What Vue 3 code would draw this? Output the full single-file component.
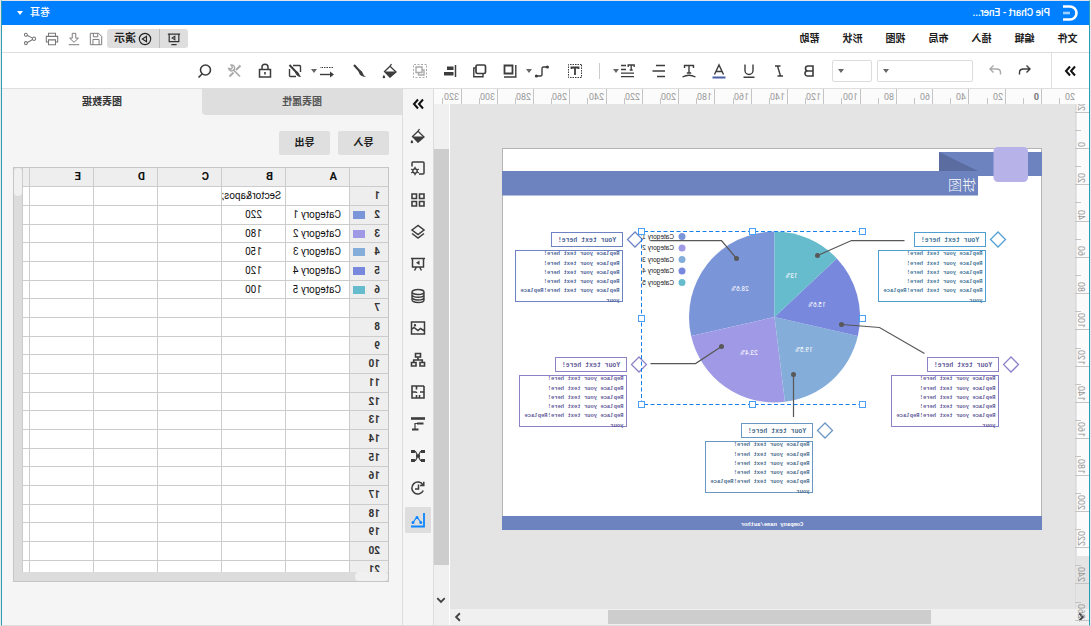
<script setup>
import { h } from 'vue'

const s = (d, o = {}) => ({ d, o })
const fill = (d, o = {}) => ({ d, o: { fill: 'currentColor', stroke: 'none', ...o } })

const shapes = {
  more: [s('M3 3.5l4 4.5-4 4.5M8 3.5l4 4.5-4 4.5', { 'stroke-width': 2 })],
  undo: [s('M6.5 2.5L3 6l3.5 3.5M3.5 6H9.5Q13.5 6 13.5 9.5V11.5')],
  redo: [s('M9.5 2.5L13 6l-3.5 3.5M12.5 6H6.5Q2.5 6 2.5 9.5V11.5')],
  bold: [s('M4 3h5a2.5 2.5 0 0 1 0 5H4zM4 8h5.5a2.5 2.5 0 0 1 0 5H4z', { 'stroke-width': 1.6 })],
  italic: [s('M6.5 3H12M4 13h5.5M9.5 3L6.5 13')],
  underline: [s('M4 1.5v6a4 4 0 0 0 8 0v-6M2.5 14.2h11')],
  color: [s('M3.5 11.5L8 2l4.500 9.5M5.2 8.5h5.6'), s('M1.5 14.5h13', { stroke: '#4a5fa8', 'stroke-width': 2 })],
  textArc: [s('M3.5 5V2.5h9V5M8 2.5V10M5.8 10h4.4'), s('M1.5 14Q8 10.5 14.5 14')],
  align: [s('M2 2.5h9M2 8h12.5M2 13.5h8')],
  spacing: [s('M1.8 4V2h6v2M4.8 2v5M3.3 7h3M10 2.5h5M10 6.5h5M2 10.2h13M2 13.7h13', { 'stroke-width': 1.3 })],
  textBox: [s('M1.5 1.5h13v13h-13z', { 'stroke-dasharray': '1.5 1', 'stroke-width': 1 }), s('M4.5 6V4.5h7V6M8 4.5V12', { 'stroke-width': 1.8 })],
  connector: [s('M3 4h3.5Q8 4 8 5.5v6Q8 13 9.5 13H13'), fill('M1 4a1.6 1.6 0 1 0 3.2 0A1.6 1.6 0 1 0 1 4M12 13a1.6 1.6 0 1 0 3.2 0A1.6 1.6 0 1 0 12 13')],
  front: [s('M5.5 2.5h8v8h-8z', { 'stroke-width': 1.8 }), s('M2.2 2v12H14')],
  back: [s('M4 2h6.5a1.5 1.5 0 0 1 1.5 1.5V9a1.5 1.5 0 0 1-1.5 1.5H4A1.5 1.5 0 0 1 2.500 9V3.5A1.5 1.5 0 0 1 4 2z', { 'stroke-width': 1.7 }), s('M12.5 5h1.7v8.7H5V11')],
  alignLeft: [s('M2.5 2v12', { 'stroke-width': 1.5 }), fill('M4.5 3.5h6.5v3.5H4.5zM4.5 9h9.5v3.5H4.5z')],
  group: [s('M1.5 1.5h13v13h-13z', { 'stroke-dasharray': '2 1.5', 'stroke-width': 1 }), s('M6 4h6v5.500H6zM6 7H4v5h5.500V9.500')],
  bucket: [s('M6.5 1L8 3.2 2 9l6 5 5.5-5.5L8 3.2', { 'stroke-width': 1.3 }), fill('M2 8.500h11.7L8 14.500zM12.8 14a1.3 1.3 0 1 0 2.6 0l-1.3-2.2z')],
  pen: [s('M14 2L8 8.5', { 'stroke-width': 2.2 }), fill('M9.5 8.5Q8.5 13.5 2 14 5 12 5 10.5 6 7.5 8 7.3z')],
  lineStyle: [s('M2 4.5h13', { 'stroke-dasharray': '1.5 1', 'stroke-width': 1.2 }), s('M3 11.5h12'), fill('M1 11.5l4-3v6z')],
  noFill: [s('M10 2.5H3.5q-1 0-1 1V9M7 13.5h5.5q1 0 1-1V6'), s('M13.5 2L6.5 9.5', { 'stroke-width': 2 }), fill('M8 9.5Q6 14 1.8 14 3.5 12 4 10.5 5 8 7 8z')],
  lock: [s('M2.5 6.5h11v7.5h-11zM5 6.5V4.2a3 3 0 0 1 6 0v2.3', { 'stroke-width': 1.5 }), fill('M7.2 9h1.6v2.5H7.2z')],
  tools: [s('M2.5 2.5L7 7M9.5 9.5l4 4', { 'stroke-width': 2 }), s('M3 13.500L10 6.500', { 'stroke-width': 1.7 }), s('M12 2a3 3 0 1 0 2.3 3.5L11.8 6 10.5 4.5z')],
  search: [s('M2.5 7a5 5 0 1 0 10 0 5 5 0 1 0-10 0M11 11l3.5 3.5', { 'stroke-width': 1.6 })],
  save: [s('M5 1.500h9.500v13h-13V5zM4.500 14.500V8.500h7v6M6 1.500V5.500h5V1.500', { 'stroke-width': 1.1 })],
  download: [s('M6 1.5h4V7h3L8 11.8 3 7h3zM2 14.5h12', { 'stroke-width': 1.1 })],
  print: [s('M4 5V1.5h8V5M4 11.5H1.5v-6.5h13v6.500H12M4 9h8v5.500H4z', { 'stroke-width': 1.2 })],
  share: [s('M5 7l6-3M5 8.5l6 3.500M1.5 7.7a1.9 1.9 0 1 0 3.8 0 1.9 1.9 0 1 0-3.8 0M11 3.2a1.7 1.7 0 1 0 3.4 0 1.7 1.7 0 1 0-3.4 0M11 12.7a1.7 1.7 0 1 0 3.4 0 1.7 1.7 0 1 0-3.4 0', { 'stroke-width': 1.2, transform: 'matrix(1 0 0 1 0 0)' })],
  screen: [s('M1 2.5h14M2.5 2.5v8.500h11V2.5M5 14.500h6', { 'stroke-width': 1.4 }), s('M7 4.8v4.200l3.2-2.1z', { 'stroke-width': 1.2 })],
  play: [s('M1.500 8a6.500 6.500 0 1 0 13 0 6.500 6.500 0 1 0-13 0M6.3 5v6l4.700-3z', { 'stroke-width': 1.3 })],
  fileGear: [s('M7 14H3q-1 0-1-1V3q0-1 1-1h10q1 0 1 1v3.500', { 'stroke-width': 1.5 }), s('M8.8 11a2.2 2.2 0 1 0 4.4 0 2.2 2.2 0 1 0-4.4 0'), s('M11 6.800v2M11 13.200v2M7.2 9l1.7 1M13.1 12l1.7 1M7.2 13l1.7-1M13.1 10l1.7-1')],
  grid: [s('M2 2h4.500v4.500H2zM9.500 2H14v4.500H9.500zM2 9.500h4.500V14H2zM9.500 9.500H14V14H9.500z', { 'stroke-width': 1.6 })],
  layers: [s('M8 1.500l6 4.500-6 4.500L2 6zM2 9.500l6 4.500 6-4.500', { 'stroke-width': 1.5 })],
  easel: [s('M1 2.500h14M2.500 2.500V11h11V2.500M6.500 11L4.500 14.500M9.500 11l2 3.500', { 'stroke-width': 1.5 }), fill('M6.500 4.500v4.500l3.500-2.200z')],
  database: [s('M2 4a6 2.500 0 1 0 12 0A6 2.500 0 1 0 2 4v8a6 2.500 0 0 0 12 0V4M2 6.8a6 2.500 0 0 0 12 0M2 9.500a6 2.500 0 0 0 12 0')],
  image: [s('M1.500 2h13v12h-13zM1.500 11l4-2.500 2.500 2 4-3 2.500 2', { 'stroke-width': 1.5 }), fill('M9.8 5.2a1.200 1.200 0 1 0 2.4 0 1.200 1.200 0 1 0-2.4 0')],
  org: [s('M5.500 1.500h5V5h-5zM1.500 10.500h4.500v3.500H1.500zM10 10.500h4.500v3.500H10zM8 5v3M3.700 10.500V8h8.600v2.500', { 'stroke-width': 1.6 })],
  floor: [s('M2 2h12v12H9.500V11M6.500 14H2V2M6.500 14V11M2 8h4M9.500 2v3.500M9.500 8H14M9.500 8v1M6.500 14h3', { 'stroke-width': 1.6 })],
  gantt: [s('M1 2.500h14', { 'stroke-width': 2.6 }), s('M2.500 7.500h6.500M7.500 13.500H14', { 'stroke-width': 2.2 }), s('M9 7.500h2V13', { 'stroke-width': 1.2 })],
  mind: [s('M3 3.500h2.500L8 8l2.500-4.500H13M3 12.500h2.500L8 8l2.500 4.500H13', { 'stroke-width': 1.2 }), fill('M1 2h4v3H1zM11 2h4v3h-4zM1 11h4v3H1zM11 11h4v3h-4zM6 6.500h4v3H6z')],
  history: [s('M3 5A6 6 0 1 1 2.700 10.500M2.200 1.800V5.500H6M7.500 4.500v4.500H11', { 'stroke-width': 1.5 })],
  chart: [s('M2 1v13.500h13', { 'stroke-width': 1.8 }), s('M5 10.500L9 5l4 5.500', { 'stroke-width': 1.2 }), fill('M3.700 10.500a1.500 1.500 0 1 0 3 0 1.500 1.500 0 1 0-3 0M7.500 5.500a1.500 1.500 0 1 0 3 0 1.500 1.500 0 1 0-3 0M11.500 10.500a1.500 1.500 0 1 0 3 0 1.500 1.500 0 1 0-3 0')]
}

const Icon = (props) =>
  h(
    'svg',
    { viewBox: '0 0 16 16', fill: 'none', stroke: 'currentColor', 'stroke-width': 1.4, 'aria-hidden': 'true' },
    shapes[props.name].map((p) => h('path', { d: p.d, ...p.o }))
  )
Icon.props = ['name']

const menus = ['文件', '编辑', '插入', '布局', '视图', '形状', '帮助']
const quick = [['save', '保存'], ['download', '下载'], ['print', '打印'], ['share', '分享']]
const textTools = [
  ['bold', 'Bold'], ['italic', 'Italic'], ['underline', 'Underline'],
  ['color', 'Font color'], ['textArc', 'Curved text'], ['align', 'Align']
]
const shapeTools = [
  ['textBox', 'Text box'], ['connector', 'Connector', 'drop'], ['front', 'Bring to front'], ['back', 'Send to back'],
  ['alignLeft', 'Align left'], ['group', 'Group', 'off'], ['bucket', 'Fill'], ['pen', 'Line color'],
  ['lineStyle', 'Line style', 'drop'], ['noFill', 'Style'], ['lock', 'Lock'], ['tools', 'Tools', 'off'], ['search', 'Find']
]
const rail = ['more', 'bucket', 'fileGear', 'grid', 'layers', 'easel', 'database', 'image', 'org', 'floor', 'gantt', 'mind', 'history', 'chart']

const step = 18.14
const ticks = (from, to, zero) =>
  Array.from({ length: to - from + 1 }, (_, i) => {
    const n = from + i
    return { pos: Math.round(zero + n * step), label: n % 2 === 0 ? Math.abs(n * 10) : null }
  })
const hTicks = ticks(-2, 34, 33)
const vTicks = ticks(-2, 27, 44)

const series = [
  { name: 'Category 1', value: 220, color: '#7a95d8', pct: '28.6%', lx: 604, ly: 286 },
  { name: 'Category 2', value: 180, color: '#a09ae6', pct: '23.4%', lx: 586, ly: 414 },
  { name: 'Category 3', value: 150, color: '#84aed9', pct: '19.5%', lx: 476, ly: 408 },
  { name: 'Category 4', value: 120, color: '#7888dd', pct: '15.6%', lx: 450, ly: 318 },
  { name: 'Category 5', value: 100, color: '#66bbcd', pct: '13%', lx: 501, ly: 260 }
]
const total = series.reduce((a, b) => a + b.value, 0)
const cx = 535
const cy = 338
const r = 171
let angle = 0
const slices = series.map((d) => {
  const a0 = angle
  angle += (d.value / total) * Math.PI * 2
  const at = (a) => `${(cx + r * Math.sin(a)).toFixed(1)} ${(cy - r * Math.cos(a)).toFixed(1)}`
  return { ...d, path: `M${cx} ${cy}L${at(a0)}A${r} ${r} 0 0 1 ${at(angle)}Z` }
})

const bodyLines = [
  ['Replace your text here!', 45], ['Replace your text here!', 65], ['Replace your text here!', 83],
  ['Replace your text here!', 101], ['Replace your text here!Replace', 119], ['your', 139]
]
const callouts = [
  { x: 113, y: 169, line: '#4f9fd3', text: '#3f7597' },
  { x: 831, y: 419, line: '#8c82c8', text: '#635a98' },
  { x: 839, y: 169, line: '#6d83c4', text: '#4c6296' },
  { x: 87, y: 419, line: '#8c82c8', text: '#635a98' },
  { x: 459, y: 551, line: '#6a97c2', text: '#4b6c8c' }
]
const leaders = [
  { dot: [611, 221], pts: '611,221 641,185 783,185' },
  { dot: [449, 215], pts: '449,215 381,185 275,185' },
  { dot: [401, 353], pts: '401,353 325,359 235,411' },
  { dot: [497, 453], pts: '497,453 497,538' },
  { dot: [641, 397], pts: '641,397 693,431 783,431' }
]
const handles = [
  [359, 167], [579, 167], [801, 167], [359, 341], [801, 341], [359, 513], [579, 513], [801, 513]
]

const columns = ['A', 'B', 'C', 'D', 'E']
const rows = Array.from({ length: 21 }, (_, i) => {
  const d = series[i - 1]
  return { n: i + 1, color: d?.color, a: d?.name ?? '', b: i === 0 ? 'Sector&apos;' : d?.value ?? '' }
})
</script>

<template>
  <div class="app">
    <header class="title-bar">
      <svg class="logo" viewBox="0 0 16 16" fill="none" stroke="#fff" aria-hidden="true">
        <path d="M15 1.500H8a6.500 6.500 0 0 0 0 13h7" stroke-width="2.600" />
        <path d="M8 8h7" stroke="#9fd0ff" stroke-width="2.600" />
      </svg>
      <span class="doc-name">Pie Chart - Ener...</span>
      <button class="user" type="button">卷耳<i class="caret light"></i></button>
    </header>

    <nav class="menu-bar">
      <button v-for="m in menus" :key="m" class="menu" type="button">{{ m }}</button>
      <div class="present">
        <button type="button" class="present-screen" aria-label="全屏"><Icon name="screen" class="icon14" /></button>
        <button type="button" class="present-play"><Icon name="play" class="icon14" />演示</button>
      </div>
      <button v-for="q in quick" :key="q[0]" class="quick" type="button" :aria-label="q[1]"><Icon :name="q[0]" class="icon14" /></button>
    </nav>

    <div class="toolbar">
      <button class="expand" type="button" aria-label="Expand"><Icon name="more" class="icon" /></button>
      <button class="tool history" type="button" aria-label="Undo"><Icon name="undo" class="icon" /></button>
      <button class="tool off" type="button" aria-label="Redo"><Icon name="redo" class="icon" /></button>
      <label class="pick family"><select aria-label="Font family"><option></option></select><i class="caret"></i></label>
      <label class="pick size"><select aria-label="Font size"><option></option></select><i class="caret"></i></label>
      <button v-for="t in textTools" :key="t[0]" class="tool" type="button" :aria-label="t[1]"><Icon :name="t[0]" class="icon" /></button>
      <button class="tool spacing" type="button" aria-label="Line spacing"><Icon name="spacing" class="icon" /><i class="caret"></i></button>
      <span class="rule"></span>
      <button v-for="t in shapeTools" :key="t[0]" class="tool" :class="t[2]" type="button" :aria-label="t[1]">
        <Icon :name="t[0]" class="icon" /><i v-if="t[2] === 'drop'" class="caret"></i>
      </button>
    </div>

    <main class="main">
      <section class="workspace">
        <svg class="h-ruler" aria-hidden="true">
          <g v-for="t in hTicks" :key="t.pos">
            <rect :x="t.pos" :y="t.label === null ? 9 : 0" width="1" :height="t.label === null ? 6 : 15" fill="#c4c4c4" />
            <text v-if="t.label !== null" :x="t.pos + 3" y="11" :class="{ zero: t.label === 0 }">{{ t.label }}</text>
          </g>
        </svg>
        <div class="canvas">
          <svg class="page" viewBox="0 0 1080 764">
            <rect x="1" y="1" width="1078" height="762" fill="#fff" stroke="#b4b4b4" stroke-width="2" />
            <rect x="0" y="8" width="206" height="48" fill="#6d83bf" />
            <path d="M206 8v38h-78z" fill="#5a6ca0" />
            <rect x="128" y="46" width="952" height="49" fill="#6d83bf" />
            <rect x="28" y="-2" width="69" height="70" rx="9" fill="#b7b2e8" />
            <text x="132" y="83" class="page-title">饼图</text>
            <rect x="0" y="736" width="1080" height="28" fill="#6d83bf" />
            <text x="540" y="756" class="footer-text">Company name/author</text>

            <path v-for="d in slices" :key="d.name" :d="d.path" :fill="d.color" />
            <text v-for="d in slices" :key="d.pct" :x="d.lx" :y="d.ly" class="pct">{{ d.pct }}</text>
            <g v-for="(d, i) in series" :key="d.name">
              <circle cx="720" :cy="177 + i * 23" r="7" :fill="d.color" />
              <text x="736" :y="181 + i * 23" class="legend">{{ d.name }}</text>
            </g>

            <g v-for="l in leaders" :key="l.pts">
              <polyline :points="l.pts" fill="none" stroke="#585858" stroke-width="2.500" />
              <circle :cx="l.dot[0]" :cy="l.dot[1]" r="5" fill="#585858" />
            </g>

            <g v-for="c in callouts" :key="c.x" :transform="`translate(${c.x} ${c.y})`">
              <rect width="142" height="28" fill="none" :stroke="c.line" stroke-width="2" />
              <rect y="36" width="214" height="102" fill="none" :stroke="c.line" stroke-width="2" />
              <path d="M-25 -1L-10 14L-25 29L-40 14Z" fill="none" :stroke="c.line" stroke-width="2.500" />
              <text x="71" y="19" class="call-head" :fill="c.text">Your text here!</text>
              <text v-for="b in bodyLines" :key="b[1]" x="6" :y="b[1]" class="call-body" :fill="c.text">{{ b[0] }}</text>
            </g>

            <path d="M359 167H801V513H359" fill="none" stroke="#1480ee" stroke-width="2" stroke-dasharray="8 5" />
            <rect v-for="p in handles" :key="p.join()" :x="p[0] - 6" :y="p[1] - 6" width="12" height="12" fill="#fff" stroke="#4aa0f5" stroke-width="2" />
          </svg>
        </div>
        <div class="v-scroll">
          <div class="v-thumb"></div>
          <svg class="arrow" viewBox="0 0 8 8"><path d="M1 2.500l3 3 3-3" /></svg>
        </div>
        <div class="h-scroll">
          <svg class="arrow" viewBox="0 0 8 8"><path d="M5.500 1l-3 3 3 3" /></svg>
          <div class="h-thumb"></div>
          <svg class="arrow" viewBox="0 0 8 8"><path d="M2.500 1l3 3-3 3" /></svg>
        </div>
        <svg class="v-ruler" aria-hidden="true">
          <rect width="12" height="452" fill="#fbfbfb" />
          <rect x="13" width="1" height="505" fill="#dcdcdc" />
          <g v-for="t in vTicks" :key="t.pos">
            <rect :x="t.label === null ? 8 : 0" :y="t.pos" :width="t.label === null ? 6 : 14" height="1" fill="#c4c4c4" />
            <text v-if="t.label !== null" :transform="`translate(11 ${t.pos - 1}) rotate(-90)`">{{ t.label }}</text>
          </g>
        </svg>
      </section>

      <aside class="rail">
        <button v-for="n in rail" :key="n" type="button" :class="['rail-btn', n]" :aria-label="n"><Icon :name="n" class="icon" /></button>
      </aside>

      <section class="panel">
        <div class="tabs" role="tablist">
          <button class="tab idle" role="tab" type="button">图表属性</button>
          <button class="tab" role="tab" type="button" aria-selected="true">图表数据</button>
        </div>
        <div class="actions">
          <button type="button">导入</button>
          <button type="button">导出</button>
        </div>
        <div class="sheet">
          <div class="sheet-body">
            <div class="sheet-clip">
              <table>
                <thead>
                  <tr><th class="num"></th><th v-for="c in columns" :key="c" class="col">{{ c }}</th><th></th></tr>
                </thead>
                <tbody>
                  <tr v-for="row in rows" :key="row.n">
                    <th class="num"><div class="num-in">{{ row.n }}<span v-if="row.color" class="swatch" :style="{ background: row.color }"></span></div></th>
                    <td class="name">{{ row.a }}</td>
                    <td :class="row.n === 1 ? 'label' : 'value'">{{ row.b }}</td>
                    <td></td><td></td><td></td><td></td>
                  </tr>
                </tbody>
              </table>
            </div>
            <div class="sheet-v"><div></div></div>
          </div>
          <div class="sheet-h"><div></div></div>
        </div>
      </section>
    </main>
  </div>
</template>

<style>
body { background: #e8e8e8; overflow: hidden; }
</style>

<style scoped>
.app {
  box-sizing: border-box;
  height: 100vh;
  margin: 0 1px;
  border: solid #2a9db8;
  border-width: 0 1px;
  border-top: 1px solid #e0e4e8;
  border-bottom: 1px solid #dcdcdc;
  display: flex;
  flex-direction: column;
  background: #fff;
  color: #222;
  font: 10px/14px Roboto, "Noto Sans CJK SC", sans-serif;
  transform: scaleX(-1);
}
.app *, .app *::before { box-sizing: border-box; }
button {
  display: flex;
  align-items: center;
  justify-content: center;
  padding: 0;
  border: 0;
  background: none;
  color: inherit;
  font: inherit;
}
svg { display: block; flex: none; }
.icon { width: 16px; height: 16px; }
.icon14 { width: 14px; height: 14px; }
.caret {
  flex: none;
  width: 0;
  height: 0;
  border: solid transparent;
  border-width: 4px 3px 0;
  border-top-color: #666;
}
.caret.light { border-top-color: #fff; margin-left: 7px; }

.title-bar {
  flex: none;
  height: 24px;
  display: flex;
  align-items: center;
  padding: 0 15px 0 11px;
  background: #007fff;
  color: #fff;
}
.logo { width: 16px; height: 16px; margin-right: 12px; }
.doc-name { font-weight: 500; }
.user { margin-left: auto; font-weight: 500; }

.menu-bar {
  flex: none;
  height: 28px;
  display: flex;
  align-items: center;
  padding-right: 17px;
  border-bottom: 1px solid #dedede;
}
.menu { width: 43px; height: 26px; font-weight: 700; color: #1c1c1c; }
.present {
  display: flex;
  height: 19px;
  margin-left: auto;
  background: #dedede;
  border-radius: 3px;
  color: #333;
}
.present-screen { width: 29px; border-right: 1px solid #bcbcbc; }
.present-play { width: 52px; gap: 2px; font-size: 11px; font-weight: 700; color: #222; }
.quick { width: 22px; height: 22px; color: #777; }

.toolbar {
  flex: none;
  height: 36px;
  display: flex;
  align-items: center;
  border-bottom: 1px solid #dedede;
  color: #3c3c3c;
}
.expand { width: 38px; height: 100%; border-right: 1px solid #dedede; color: #111; }
.tool { width: 30px; height: 28px; flex: none; }
.tool.history { margin-left: 11px; }
.tool.off { color: #aaa; }
.tool.drop { width: 35px; gap: 2px; padding-left: 8px; }
.tool.spacing { width: 44px; gap: 1px; padding-left: 8px; justify-content: flex-start; }
.pick {
  display: flex;
  align-items: center;
  height: 22px;
  border: 1px solid #dcdcdc;
  border-radius: 2px;
  padding-right: 5px;
}
.pick select {
  flex: 1;
  min-width: 0;
  height: 20px;
  padding: 0;
  border: 0;
  background: none;
  appearance: none;
}
.pick.family { width: 96px; margin-left: 7px; }
.pick.size { width: 40px; margin: 0 8px 0 5px; }
.rule { width: 1px; height: 16px; margin-right: 9px; background: #ccc; }

.main { flex: 1; min-height: 0; display: flex; }
.workspace {
  flex: 1;
  min-width: 0;
  display: grid;
  grid-template-columns: 14px minmax(0, 1fr) 16px;
  grid-template-rows: 15px minmax(0, 1fr) 16px;
  background: #fff;
}
.h-ruler, .v-ruler { fill: #999; font-size: 9px; overflow: hidden; }
.h-ruler { grid-area: 1 / 2 / 2 / 4; width: 100%; height: 15px; background: #fbfbfb; }
.zero { fill: #777; font-weight: 700; }
.v-ruler { grid-area: 2 / 1 / 4 / 2; width: 14px; height: 100%; }
.canvas {
  grid-area: 2 / 2 / 3 / 3;
  padding: 44px 0 0 33px;
  overflow: hidden;
  background: #e4e4e4;
  box-shadow: -14px 0 0 #e4e4e4;
}
.page { width: 540px; height: 382px; overflow: visible; }
.page-title { font-size: 28px; fill: #fff; font-weight: 300; }
.footer-text { font: 700 11px "Liberation Mono", monospace; fill: #fff; text-anchor: middle; }
.pct { font: 13px Roboto, sans-serif; fill: #fff; text-anchor: middle; }
.legend { font: 13px "Liberation Sans", sans-serif; fill: #222; }
.call-head { font: 700 13px "Liberation Mono", monospace; text-anchor: middle; }
.call-body { font: 700 11px "Liberation Mono", monospace; }

.v-scroll {
  grid-area: 2 / 3 / 4 / 4;
  display: flex;
  flex-direction: column;
  align-items: center;
  padding: 45px 0 20px;
  border-left: 1px solid #fff;
  background: #f0f0f0;
}
.v-thumb { flex: 1; width: 100%; margin-bottom: 30px; background: #cdcdcd; }
.arrow { width: 10px; height: 10px; fill: none; stroke: #444; stroke-width: 1.5; }
.h-scroll {
  grid-area: 3 / 1 / 4 / 3;
  display: flex;
  align-items: center;
  padding: 1px 3px;
  background: #f0f0f0;
}
.h-thumb { width: 51%; height: 100%; margin: 0 auto 0 145px; background: #cdcdcd; }

.rail {
  flex: none;
  width: 31px;
  padding-top: 2px;
  display: flex;
  flex-direction: column;
  align-items: center;
  gap: 6px;
  border-left: 1px solid #dcdcdc;
  background: #f5f5f5;
  color: #3c3c3c;
}
.rail-btn { width: 26px; height: 26px; }
.rail-btn.more { color: #111; }
.rail-btn.chart { background: #dedede; color: #0a84ff; }

.panel {
  flex: none;
  width: 401px;
  display: flex;
  flex-direction: column;
  border-left: 1px solid #dcdcdc;
  background: #f5f5f5;
}
.tabs { display: flex; height: 26px; }
.tab { flex: 1; font-weight: 700; color: #333; }
.tab.idle { background: #dedede; border-bottom-right-radius: 4px; color: #555; }
.actions { display: flex; gap: 8px; padding: 16px 13px 12px; }
.actions button { width: 51px; height: 24px; border-radius: 2px; background: #dfdfdf; font-weight: 700; }
.sheet {
  flex: 1;
  min-height: 0;
  margin: 0 11px 43px 13px;
  display: flex;
  flex-direction: column;
  border: 1px solid #c6c6c6;
}
.sheet-body { flex: 1; min-height: 0; display: flex; }
.sheet-clip { flex: 1; min-width: 0; overflow: hidden; background: #fff; }
.sheet-v { width: 9px; border-left: 1px solid #ccc; background: #dcdcdc; }
.sheet-v div { height: 28px; border-radius: 4px; background: #f0f0f0; }
.sheet-h { height: 9px; background: #dcdcdc; }
.sheet-h div { width: 33px; height: 9px; border-radius: 4px; background: #f0f0f0; }
table { width: 100%; border-collapse: separate; border-spacing: 0; table-layout: fixed; color: #111; }
th, td {
  height: 19px;
  padding: 0;
  border: solid #ccc;
  border-width: 0 1px 1px 0;
  line-height: 14px;
  text-align: left;
  white-space: nowrap;
  overflow: hidden;
}
tbody tr:nth-child(3n) > * { height: 18px; }
th { background: #eee; font-weight: 700; color: #333; }
th.num { width: 39px; }
th.col { width: 64px; padding-left: 12px; font-size: 11px; color: #111; }
.num-in { display: flex; align-items: center; justify-content: space-between; padding: 0 3px 0 8px; }
.swatch { width: 12px; height: 8px; }
td.name { padding-left: 8px; }
td.label { padding-left: 4px; }
td.value { text-align: center; }
tr > :last-child { border-right: 0; }
</style>
